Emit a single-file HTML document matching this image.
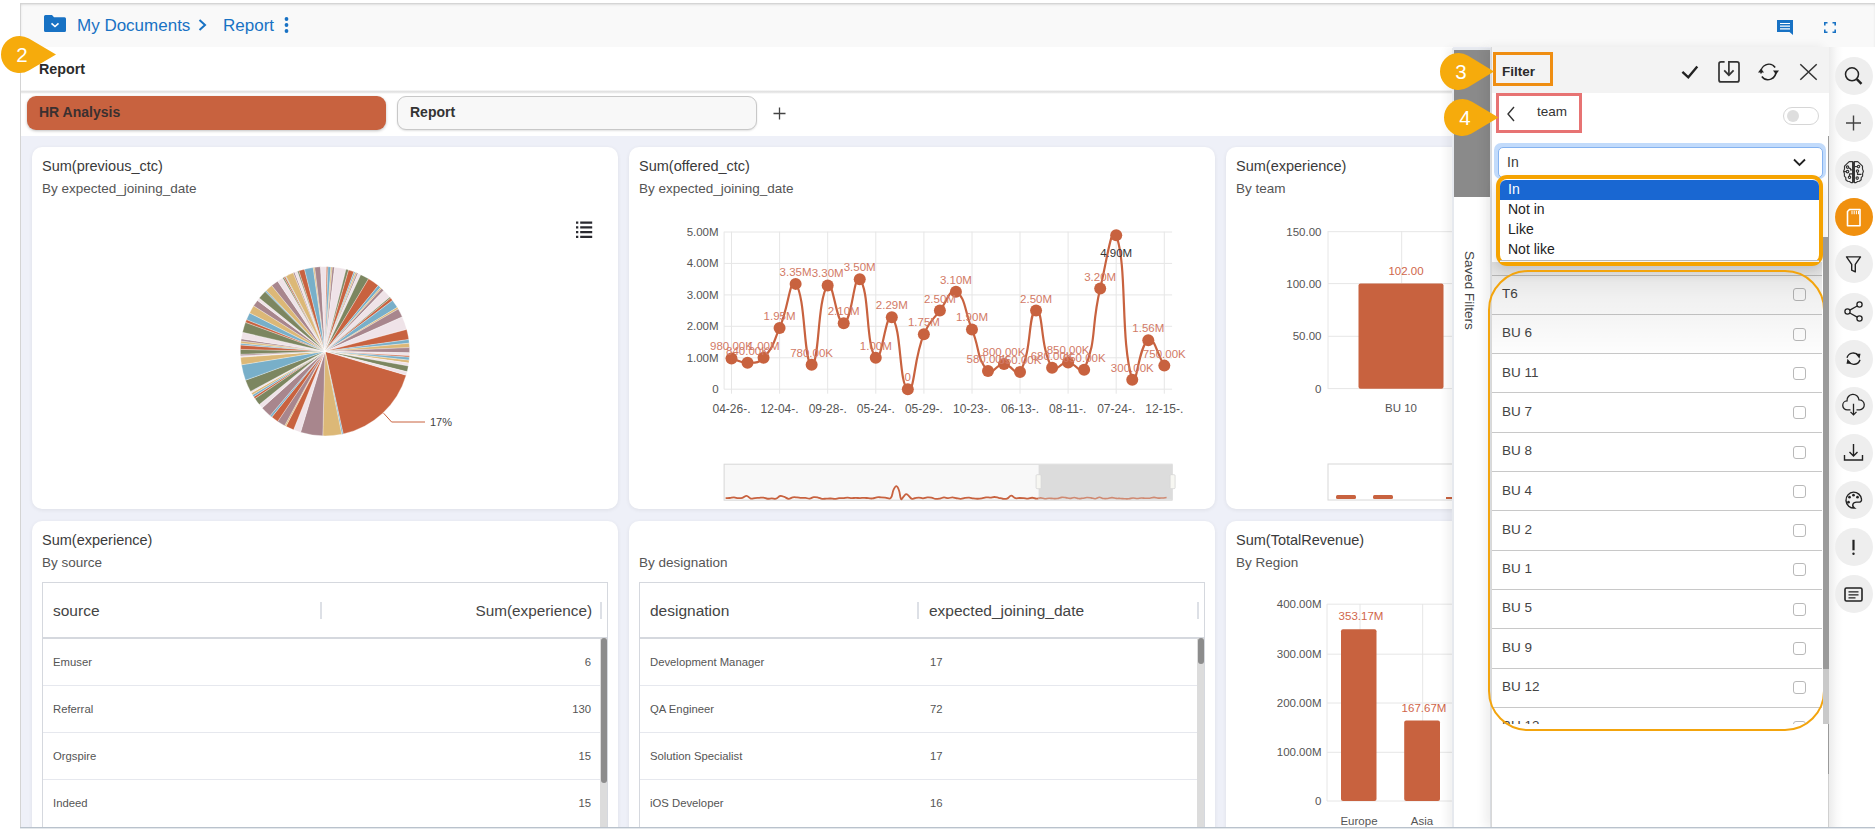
<!DOCTYPE html>
<html><head><meta charset="utf-8"><style>
*{box-sizing:border-box;margin:0;padding:0}
html,body{width:1875px;height:829px;overflow:hidden;background:#fff;font-family:"Liberation Sans", sans-serif;color:#333}
.a{position:absolute}
.t{position:absolute;white-space:nowrap;line-height:1}
svg{position:absolute;overflow:visible}
</style></head><body>
<div class="a" style="left:20px;top:3px;width:1855px;height:826px;background:#eef0f8"></div><div class="a" style="left:20px;top:3px;width:1px;height:826px;background:#d4d4d4"></div><div class="a" style="left:21px;top:3px;width:1854px;height:44px;background:#f9f9f9;box-shadow:inset 0 2px 3px -1px rgba(0,0,0,0.22)"></div><div class="a" style="left:21px;top:47px;width:1432px;height:45px;background:#fff"></div><div class="a" style="left:21px;top:90px;width:1432px;height:4px;background:linear-gradient(#fff,#e4e4e4 30%,#e0e0e0 50%,#f4f4f4 80%,#fff)"></div><div class="a" style="left:21px;top:94px;width:1432px;height:42px;background:#fff"></div><div class="a" style="left:20px;top:826.5px;width:1855px;height:1.5px;background:#b9c2cc"></div><div class="a" style="left:20px;top:828px;width:1855px;height:1px;background:#e4e8ec"></div><svg style="left:44px;top:15px" width="22" height="17" viewBox="0 0 22 17">
<path d="M1.5 0 H8 L10 2.2 H20.5 Q22 2.2 22 3.7 V15.5 Q22 17 20.5 17 H1.5 Q0 17 0 15.5 V1.5 Q0 0 1.5 0Z" fill="#1872c4"/>
<path d="M7.5 8.3 L11 11.5 L14.5 8.3" stroke="#fff" stroke-width="1.6" fill="none"/>
</svg><div class="t" style="left:77px;top:17px;font-size:17px;color:#1872c4">My Documents</div><svg style="left:198px;top:19px" width="9" height="12" viewBox="0 0 9 12"><path d="M1.5 1 L7 6 L1.5 11" stroke="#1872c4" stroke-width="2" fill="none"/></svg><div class="t" style="left:223px;top:17px;font-size:17px;color:#1872c4">Report</div><svg style="left:283px;top:17px" width="7" height="16" viewBox="0 0 7 16"><circle cx="3.5" cy="2" r="1.9" fill="#1872c4"/><circle cx="3.5" cy="8" r="1.9" fill="#1872c4"/><circle cx="3.5" cy="14" r="1.9" fill="#1872c4"/></svg><svg style="left:1777px;top:20px" width="16" height="15" viewBox="0 0 16 15">
<path d="M0 0 H16 V15 L12.5 12 H0 Z" fill="#1872c4"/>
<path d="M3 3.5 H13 M3 6.2 H13 M3 8.9 H13" stroke="#fff" stroke-width="1.2"/>
</svg><svg style="left:1824px;top:22px" width="12" height="11" viewBox="0 0 12 11">
<path d="M0.8 3.5 V0.8 H3.5 M8.5 0.8 H11.2 V3.5 M11.2 7.5 V10.2 H8.5 M3.5 10.2 H0.8 V7.5" stroke="#1872c4" stroke-width="1.6" fill="none"/>
</svg><div class="t" style="left:39px;top:61.5px;font-size:14.3px;font-weight:bold;color:#2b2b2b">Report</div><div class="a" style="left:27px;top:96px;width:359px;height:34px;background:#c8623f;border-radius:9px;box-shadow:0 1px 3px rgba(0,0,0,0.25)"></div><div class="t" style="left:39px;top:105px;font-size:14px;font-weight:bold;color:#3a3030">HR Analysis</div><div class="a" style="left:397px;top:96px;width:360px;height:34px;background:#f8f8f8;border:1px solid #c8c8c8;border-radius:9px;box-shadow:0 1px 2px rgba(0,0,0,0.12)"></div><div class="t" style="left:410px;top:105px;font-size:14px;font-weight:bold;color:#333">Report</div><svg style="left:773px;top:107px" width="13" height="13" viewBox="0 0 13 13"><path d="M6.5 0.5 V12.5 M0.5 6.5 H12.5" stroke="#444" stroke-width="1.3"/></svg><div class="a" style="left:32px;top:147px;width:586px;height:362px;background:#fff;border-radius:10px;box-shadow:0 1px 4px rgba(0,0,0,0.07)"></div><div class="t" style="left:42px;top:159px;font-size:14.5px;color:#3b3b3b">Sum(previous_ctc)</div><div class="t" style="left:42px;top:182px;font-size:13.5px;color:#555">By expected_joining_date</div><div class="a" style="left:629px;top:147px;width:586px;height:362px;background:#fff;border-radius:10px;box-shadow:0 1px 4px rgba(0,0,0,0.07)"></div><div class="t" style="left:639px;top:159px;font-size:14.5px;color:#3b3b3b">Sum(offered_ctc)</div><div class="t" style="left:639px;top:182px;font-size:13.5px;color:#555">By expected_joining_date</div><div class="a" style="left:1226px;top:147px;width:586px;height:362px;background:#fff;border-radius:10px;box-shadow:0 1px 4px rgba(0,0,0,0.07)"></div><div class="t" style="left:1236px;top:159px;font-size:14.5px;color:#3b3b3b">Sum(experience)</div><div class="t" style="left:1236px;top:182px;font-size:13.5px;color:#555">By team</div><div class="a" style="left:32px;top:521px;width:586px;height:340px;background:#fff;border-radius:10px;box-shadow:0 1px 4px rgba(0,0,0,0.07)"></div><div class="t" style="left:42px;top:533px;font-size:14.5px;color:#3b3b3b">Sum(experience)</div><div class="t" style="left:42px;top:556px;font-size:13.5px;color:#555">By source</div><div class="a" style="left:629px;top:521px;width:586px;height:340px;background:#fff;border-radius:10px;box-shadow:0 1px 4px rgba(0,0,0,0.07)"></div><div class="t" style="left:639px;top:556px;font-size:13.5px;color:#555">By designation</div><div class="a" style="left:1226px;top:521px;width:586px;height:340px;background:#fff;border-radius:10px;box-shadow:0 1px 4px rgba(0,0,0,0.07)"></div><div class="t" style="left:1236px;top:533px;font-size:14.5px;color:#3b3b3b">Sum(TotalRevenue)</div><div class="t" style="left:1236px;top:556px;font-size:13.5px;color:#555">By Region</div><svg style="left:0;top:0" width="1875" height="829"><path d="M325 351.3 L406.16 375.19 A84.6 84.6 0 0 1 343.17 433.93Z" fill="#c8623f" stroke="#fff" stroke-width="0.3"/><path d="M325 351.3 L343.17 433.93 A84.6 84.6 0 0 1 341.72 434.23Z" fill="#78afc9" stroke="#fff" stroke-width="0.3"/><path d="M325 351.3 L341.72 434.23 A84.6 84.6 0 0 1 322.79 435.87Z" fill="#dcb877" stroke="#fff" stroke-width="0.3"/><path d="M325 351.3 L322.79 435.87 A84.6 84.6 0 0 1 300.55 432.29Z" fill="#a8868d" stroke="#fff" stroke-width="0.3"/><path d="M325 351.3 L300.55 432.29 A84.6 84.6 0 0 1 293.58 429.85Z" fill="#efe3e8" stroke="#fff" stroke-width="0.3"/><path d="M325 351.3 L293.58 429.85 A84.6 84.6 0 0 1 285.94 426.34Z" fill="#c8623f" stroke="#fff" stroke-width="0.3"/><path d="M325 351.3 L285.94 426.34 A84.6 84.6 0 0 1 284.63 425.65Z" fill="#dcb877" stroke="#fff" stroke-width="0.3"/><path d="M325 351.3 L284.63 425.65 A84.6 84.6 0 0 1 277.69 421.44Z" fill="#a8868d" stroke="#fff" stroke-width="0.3"/><path d="M325 351.3 L277.69 421.44 A84.6 84.6 0 0 1 271.76 417.05Z" fill="#c8623f" stroke="#fff" stroke-width="0.3"/><path d="M325 351.3 L271.76 417.05 A84.6 84.6 0 0 1 270.06 415.63Z" fill="#78afc9" stroke="#fff" stroke-width="0.3"/><path d="M325 351.3 L270.06 415.63 A84.6 84.6 0 0 1 262.13 407.91Z" fill="#a8868d" stroke="#fff" stroke-width="0.3"/><path d="M325 351.3 L262.13 407.91 A84.6 84.6 0 0 1 259.25 404.54Z" fill="#efe3e8" stroke="#fff" stroke-width="0.3"/><path d="M325 351.3 L259.25 404.54 A84.6 84.6 0 0 1 254.86 398.61Z" fill="#7c8660" stroke="#fff" stroke-width="0.3"/><path d="M325 351.3 L254.86 398.61 A84.6 84.6 0 0 1 253.65 396.76Z" fill="#c8623f" stroke="#fff" stroke-width="0.3"/><path d="M325 351.3 L253.65 396.76 A84.6 84.6 0 0 1 252.48 394.87Z" fill="#78afc9" stroke="#fff" stroke-width="0.3"/><path d="M325 351.3 L252.48 394.87 A84.6 84.6 0 0 1 251.37 392.96Z" fill="#dcb877" stroke="#fff" stroke-width="0.3"/><path d="M325 351.3 L251.37 392.96 A84.6 84.6 0 0 1 250.51 391.41Z" fill="#efe3e8" stroke="#fff" stroke-width="0.3"/><path d="M325 351.3 L250.51 391.41 A84.6 84.6 0 0 1 245.50 380.23Z" fill="#7c8660" stroke="#fff" stroke-width="0.3"/><path d="M325 351.3 L245.50 380.23 A84.6 84.6 0 0 1 241.49 364.83Z" fill="#78afc9" stroke="#fff" stroke-width="0.3"/><path d="M325 351.3 L241.49 364.83 A84.6 84.6 0 0 1 240.61 357.20Z" fill="#dcb877" stroke="#fff" stroke-width="0.3"/><path d="M325 351.3 L240.61 357.20 A84.6 84.6 0 0 1 240.52 355.73Z" fill="#efe3e8" stroke="#fff" stroke-width="0.3"/><path d="M325 351.3 L240.52 355.73 A84.6 84.6 0 0 1 240.45 354.25Z" fill="#a8868d" stroke="#fff" stroke-width="0.3"/><path d="M325 351.3 L240.45 354.25 A84.6 84.6 0 0 1 240.42 349.38Z" fill="#7c8660" stroke="#fff" stroke-width="0.3"/><path d="M325 351.3 L240.42 349.38 A84.6 84.6 0 0 1 240.64 344.96Z" fill="#c8623f" stroke="#fff" stroke-width="0.3"/><path d="M325 351.3 L240.64 344.96 A84.6 84.6 0 0 1 240.79 343.19Z" fill="#78afc9" stroke="#fff" stroke-width="0.3"/><path d="M325 351.3 L240.79 343.19 A84.6 84.6 0 0 1 241.03 340.99Z" fill="#dcb877" stroke="#fff" stroke-width="0.3"/><path d="M325 351.3 L241.03 340.99 A84.6 84.6 0 0 1 241.33 338.80Z" fill="#a8868d" stroke="#fff" stroke-width="0.3"/><path d="M325 351.3 L241.33 338.80 A84.6 84.6 0 0 1 242.57 332.27Z" fill="#efe3e8" stroke="#fff" stroke-width="0.3"/><path d="M325 351.3 L242.57 332.27 A84.6 84.6 0 0 1 245.50 322.37Z" fill="#7c8660" stroke="#fff" stroke-width="0.3"/><path d="M325 351.3 L245.50 322.37 A84.6 84.6 0 0 1 246.56 319.61Z" fill="#c8623f" stroke="#fff" stroke-width="0.3"/><path d="M325 351.3 L246.56 319.61 A84.6 84.6 0 0 1 249.62 312.89Z" fill="#78afc9" stroke="#fff" stroke-width="0.3"/><path d="M325 351.3 L249.62 312.89 A84.6 84.6 0 0 1 253.65 305.84Z" fill="#dcb877" stroke="#fff" stroke-width="0.3"/><path d="M325 351.3 L253.65 305.84 A84.6 84.6 0 0 1 257.44 300.39Z" fill="#a8868d" stroke="#fff" stroke-width="0.3"/><path d="M325 351.3 L257.44 300.39 A84.6 84.6 0 0 1 259.25 298.06Z" fill="#efe3e8" stroke="#fff" stroke-width="0.3"/><path d="M325 351.3 L259.25 298.06 A84.6 84.6 0 0 1 265.18 291.48Z" fill="#7c8660" stroke="#fff" stroke-width="0.3"/><path d="M325 351.3 L265.18 291.48 A84.6 84.6 0 0 1 266.23 290.44Z" fill="#78afc9" stroke="#fff" stroke-width="0.3"/><path d="M325 351.3 L266.23 290.44 A84.6 84.6 0 0 1 271.76 285.55Z" fill="#dcb877" stroke="#fff" stroke-width="0.3"/><path d="M325 351.3 L271.76 285.55 A84.6 84.6 0 0 1 277.69 281.16Z" fill="#a8868d" stroke="#fff" stroke-width="0.3"/><path d="M325 351.3 L277.69 281.16 A84.6 84.6 0 0 1 282.70 278.03Z" fill="#efe3e8" stroke="#fff" stroke-width="0.3"/><path d="M325 351.3 L282.70 278.03 A84.6 84.6 0 0 1 283.99 277.31Z" fill="#7c8660" stroke="#fff" stroke-width="0.3"/><path d="M325 351.3 L283.99 277.31 A84.6 84.6 0 0 1 285.28 276.60Z" fill="#c8623f" stroke="#fff" stroke-width="0.3"/><path d="M325 351.3 L285.28 276.60 A84.6 84.6 0 0 1 285.94 276.26Z" fill="#78afc9" stroke="#fff" stroke-width="0.3"/><path d="M325 351.3 L285.94 276.26 A84.6 84.6 0 0 1 293.31 272.86Z" fill="#dcb877" stroke="#fff" stroke-width="0.3"/><path d="M325 351.3 L293.31 272.86 A84.6 84.6 0 0 1 294.68 272.32Z" fill="#a8868d" stroke="#fff" stroke-width="0.3"/><path d="M325 351.3 L294.68 272.32 A84.6 84.6 0 0 1 297.46 271.31Z" fill="#efe3e8" stroke="#fff" stroke-width="0.3"/><path d="M325 351.3 L297.46 271.31 A84.6 84.6 0 0 1 298.86 270.84Z" fill="#7c8660" stroke="#fff" stroke-width="0.3"/><path d="M325 351.3 L298.86 270.84 A84.6 84.6 0 0 1 304.53 269.21Z" fill="#c8623f" stroke="#fff" stroke-width="0.3"/><path d="M325 351.3 L304.53 269.21 A84.6 84.6 0 0 1 313.23 267.52Z" fill="#78afc9" stroke="#fff" stroke-width="0.3"/><path d="M325 351.3 L313.23 267.52 A84.6 84.6 0 0 1 314.69 267.33Z" fill="#dcb877" stroke="#fff" stroke-width="0.3"/><path d="M325 351.3 L314.69 267.33 A84.6 84.6 0 0 1 320.57 266.82Z" fill="#a8868d" stroke="#fff" stroke-width="0.3"/><path d="M325 351.3 L320.57 266.82 A84.6 84.6 0 0 1 326.48 266.71Z" fill="#efe3e8" stroke="#fff" stroke-width="0.3"/><path d="M325 351.3 L326.48 266.71 A84.6 84.6 0 0 1 327.95 266.75Z" fill="#c8623f" stroke="#fff" stroke-width="0.3"/><path d="M325 351.3 L327.95 266.75 A84.6 84.6 0 0 1 330.90 266.91Z" fill="#78afc9" stroke="#fff" stroke-width="0.3"/><path d="M325 351.3 L330.90 266.91 A84.6 84.6 0 0 1 332.37 267.02Z" fill="#dcb877" stroke="#fff" stroke-width="0.3"/><path d="M325 351.3 L332.37 267.02 A84.6 84.6 0 0 1 334.58 267.24Z" fill="#a8868d" stroke="#fff" stroke-width="0.3"/><path d="M325 351.3 L334.58 267.24 A84.6 84.6 0 0 1 346.04 269.36Z" fill="#efe3e8" stroke="#fff" stroke-width="0.3"/><path d="M325 351.3 L346.04 269.36 A84.6 84.6 0 0 1 348.60 270.06Z" fill="#7c8660" stroke="#fff" stroke-width="0.3"/><path d="M325 351.3 L348.60 270.06 A84.6 84.6 0 0 1 353.93 271.80Z" fill="#c8623f" stroke="#fff" stroke-width="0.3"/><path d="M325 351.3 L353.93 271.80 A84.6 84.6 0 0 1 355.32 272.32Z" fill="#78afc9" stroke="#fff" stroke-width="0.3"/><path d="M325 351.3 L355.32 272.32 A84.6 84.6 0 0 1 356.69 272.86Z" fill="#dcb877" stroke="#fff" stroke-width="0.3"/><path d="M325 351.3 L356.69 272.86 A84.6 84.6 0 0 1 358.06 273.43Z" fill="#a8868d" stroke="#fff" stroke-width="0.3"/><path d="M325 351.3 L358.06 273.43 A84.6 84.6 0 0 1 360.75 274.63Z" fill="#efe3e8" stroke="#fff" stroke-width="0.3"/><path d="M325 351.3 L360.75 274.63 A84.6 84.6 0 0 1 368.57 278.78Z" fill="#7c8660" stroke="#fff" stroke-width="0.3"/><path d="M325 351.3 L368.57 278.78 A84.6 84.6 0 0 1 378.24 285.55Z" fill="#c8623f" stroke="#fff" stroke-width="0.3"/><path d="M325 351.3 L378.24 285.55 A84.6 84.6 0 0 1 380.50 287.45Z" fill="#78afc9" stroke="#fff" stroke-width="0.3"/><path d="M325 351.3 L380.50 287.45 A84.6 84.6 0 0 1 381.61 288.43Z" fill="#dcb877" stroke="#fff" stroke-width="0.3"/><path d="M325 351.3 L381.61 288.43 A84.6 84.6 0 0 1 383.77 290.44Z" fill="#a8868d" stroke="#fff" stroke-width="0.3"/><path d="M325 351.3 L383.77 290.44 A84.6 84.6 0 0 1 389.81 296.92Z" fill="#efe3e8" stroke="#fff" stroke-width="0.3"/><path d="M325 351.3 L389.81 296.92 A84.6 84.6 0 0 1 390.75 298.06Z" fill="#7c8660" stroke="#fff" stroke-width="0.3"/><path d="M325 351.3 L390.75 298.06 A84.6 84.6 0 0 1 392.56 300.39Z" fill="#c8623f" stroke="#fff" stroke-width="0.3"/><path d="M325 351.3 L392.56 300.39 A84.6 84.6 0 0 1 397.29 307.35Z" fill="#78afc9" stroke="#fff" stroke-width="0.3"/><path d="M325 351.3 L397.29 307.35 A84.6 84.6 0 0 1 398.27 309.00Z" fill="#dcb877" stroke="#fff" stroke-width="0.3"/><path d="M325 351.3 L398.27 309.00 A84.6 84.6 0 0 1 402.29 316.89Z" fill="#a8868d" stroke="#fff" stroke-width="0.3"/><path d="M325 351.3 L402.29 316.89 A84.6 84.6 0 0 1 406.72 329.40Z" fill="#efe3e8" stroke="#fff" stroke-width="0.3"/><path d="M325 351.3 L406.72 329.40 A84.6 84.6 0 0 1 408.78 339.53Z" fill="#c8623f" stroke="#fff" stroke-width="0.3"/><path d="M325 351.3 L408.78 339.53 A84.6 84.6 0 0 1 409.21 343.19Z" fill="#78afc9" stroke="#fff" stroke-width="0.3"/><path d="M325 351.3 L409.21 343.19 A84.6 84.6 0 0 1 409.52 347.61Z" fill="#dcb877" stroke="#fff" stroke-width="0.3"/><path d="M325 351.3 L409.52 347.61 A84.6 84.6 0 0 1 409.59 352.78Z" fill="#a8868d" stroke="#fff" stroke-width="0.3"/><path d="M325 351.3 L409.59 352.78 A84.6 84.6 0 0 1 409.48 355.73Z" fill="#efe3e8" stroke="#fff" stroke-width="0.3"/><path d="M325 351.3 L409.48 355.73 A84.6 84.6 0 0 1 409.39 357.20Z" fill="#c8623f" stroke="#fff" stroke-width="0.3"/><path d="M325 351.3 L409.39 357.20 A84.6 84.6 0 0 1 409.14 360.14Z" fill="#78afc9" stroke="#fff" stroke-width="0.3"/><path d="M325 351.3 L409.14 360.14 A84.6 84.6 0 0 1 408.78 363.07Z" fill="#dcb877" stroke="#fff" stroke-width="0.3"/><path d="M325 351.3 L408.78 363.07 A84.6 84.6 0 0 1 408.31 365.99Z" fill="#efe3e8" stroke="#fff" stroke-width="0.3"/><path d="M325 351.3 L408.31 365.99 A84.6 84.6 0 0 1 407.09 371.77Z" fill="#7c8660" stroke="#fff" stroke-width="0.3"/><path d="M325 351.3 L407.09 371.77 A84.6 84.6 0 0 1 406.16 375.19Z" fill="#efe3e8" stroke="#fff" stroke-width="0.3"/><path d="M383.6 413.2 L391.6 422 H425" stroke="#c8623f" stroke-width="1" fill="none"/><text x="430" y="426" font-size="11" fill="#444" font-family="Liberation Sans">17%</text></svg><svg style="left:0;top:0" width="1875" height="829">
<path d="M576 222.7 H578.3 M576 227.4 H578.3 M576 232.1 H578.3 M576 236.8 H578.3 M580.2 222.7 H592.2 M580.2 227.4 H592.2 M580.2 232.1 H592.2 M580.2 236.8 H592.2" stroke="#2a2a30" stroke-width="2.2"/></svg><svg style="left:0;top:0" width="1875" height="829" font-family="Liberation Sans"><g transform="translate(0.6 0.7)"><path d="M723.5 388.5 H1171.5" stroke="#e6e6e6" stroke-width="1"/><path d="M723.5 357.1 H1171.5" stroke="#e6e6e6" stroke-width="1"/><path d="M723.5 325.6 H1171.5" stroke="#e6e6e6" stroke-width="1"/><path d="M723.5 294.2 H1171.5" stroke="#e6e6e6" stroke-width="1"/><path d="M723.5 262.7 H1171.5" stroke="#e6e6e6" stroke-width="1"/><path d="M723.5 231.3 H1171.5" stroke="#e6e6e6" stroke-width="1"/><path d="M730.9 231 V393" stroke="#e6e6e6" stroke-width="1"/><path d="M779.0 231 V393" stroke="#e6e6e6" stroke-width="1"/><path d="M827.1 231 V393" stroke="#e6e6e6" stroke-width="1"/><path d="M875.2 231 V393" stroke="#e6e6e6" stroke-width="1"/><path d="M923.3 231 V393" stroke="#e6e6e6" stroke-width="1"/><path d="M971.4 231 V393" stroke="#e6e6e6" stroke-width="1"/><path d="M1019.4 231 V393" stroke="#e6e6e6" stroke-width="1"/><path d="M1067.5 231 V393" stroke="#e6e6e6" stroke-width="1"/><path d="M1115.6 231 V393" stroke="#e6e6e6" stroke-width="1"/><path d="M1163.7 231 V393" stroke="#e6e6e6" stroke-width="1"/><path d="M723.5 231 V388.5" stroke="#e6e6e6" stroke-width="1"/><text x="718" y="392.5" font-size="11.5" fill="#555" text-anchor="end">0</text><text x="718" y="361.1" font-size="11.5" fill="#555" text-anchor="end">1.00M</text><text x="718" y="329.6" font-size="11.5" fill="#555" text-anchor="end">2.00M</text><text x="718" y="298.2" font-size="11.5" fill="#555" text-anchor="end">3.00M</text><text x="718" y="266.7" font-size="11.5" fill="#555" text-anchor="end">4.00M</text><text x="718" y="235.3" font-size="11.5" fill="#555" text-anchor="end">5.00M</text><text x="711.9" y="412" font-size="12" fill="#555">04-26-.</text><text x="760.0" y="412" font-size="12" fill="#555">12-04-.</text><text x="808.1" y="412" font-size="12" fill="#555">09-28-.</text><text x="856.2" y="412" font-size="12" fill="#555">05-24-.</text><text x="904.3" y="412" font-size="12" fill="#555">05-29-.</text><text x="952.4" y="412" font-size="12" fill="#555">10-23-.</text><text x="1000.4" y="412" font-size="12" fill="#555">06-13-.</text><text x="1048.5" y="412" font-size="12" fill="#555">08-11-.</text><text x="1096.6" y="412" font-size="12" fill="#555">07-24-.</text><text x="1144.7" y="412" font-size="12" fill="#555">12-15-.</text><path d="M730.90 357.69 C738.91 359.89 738.96 362.25 746.93 362.09 C754.99 361.93 757.65 362.84 762.96 357.06 C773.68 345.39 772.26 342.70 778.99 327.19 C788.29 305.76 789.21 276.51 795.02 283.18 C805.24 294.90 802.96 363.58 811.05 363.98 C818.99 364.37 816.44 298.52 827.08 284.75 C832.47 277.77 835.63 323.94 843.11 322.48 C851.66 320.80 853.23 272.08 859.14 278.46 C869.26 289.38 864.79 344.74 875.17 357.06 C880.82 363.76 885.24 310.66 891.20 316.50 C901.27 326.38 898.21 383.72 907.23 388.50 C914.24 392.21 912.56 359.72 923.26 333.48 C928.59 320.42 930.71 321.26 939.29 309.90 C946.74 300.04 949.28 287.48 955.32 291.04 C965.31 296.92 963.66 309.77 971.35 328.76 C979.69 349.38 975.87 357.85 987.38 370.26 C991.90 375.14 995.48 363.11 1003.41 363.35 C1011.51 363.59 1015.92 377.08 1019.44 371.21 C1031.95 350.36 1027.20 310.95 1035.47 309.90 C1043.23 308.91 1039.02 346.93 1051.50 367.12 C1055.05 372.86 1059.67 361.31 1067.53 361.78 C1075.70 362.26 1080.75 375.49 1083.56 369.01 C1096.78 338.54 1090.02 328.06 1099.59 287.89 C1106.05 260.78 1111.18 221.81 1115.62 234.44 C1127.21 267.40 1119.26 338.48 1131.65 379.07 C1135.29 390.99 1138.27 343.60 1147.68 339.45 C1154.30 336.53 1155.70 352.19 1163.71 364.92" stroke="#c8623f" stroke-width="2.2" fill="none"/><circle cx="730.90" cy="357.69" r="6" fill="#c8623f"/><circle cx="746.93" cy="362.09" r="6" fill="#c8623f"/><circle cx="762.96" cy="357.06" r="6" fill="#c8623f"/><circle cx="778.99" cy="327.19" r="6" fill="#c8623f"/><circle cx="795.02" cy="283.18" r="6" fill="#c8623f"/><circle cx="811.05" cy="363.98" r="6" fill="#c8623f"/><circle cx="827.08" cy="284.75" r="6" fill="#c8623f"/><circle cx="843.11" cy="322.48" r="6" fill="#c8623f"/><circle cx="859.14" cy="278.46" r="6" fill="#c8623f"/><circle cx="875.17" cy="357.06" r="6" fill="#c8623f"/><circle cx="891.20" cy="316.50" r="6" fill="#c8623f"/><circle cx="907.23" cy="388.50" r="6" fill="#c8623f"/><circle cx="923.26" cy="333.48" r="6" fill="#c8623f"/><circle cx="939.29" cy="309.90" r="6" fill="#c8623f"/><circle cx="955.32" cy="291.04" r="6" fill="#c8623f"/><circle cx="971.35" cy="328.76" r="6" fill="#c8623f"/><circle cx="987.38" cy="370.26" r="6" fill="#c8623f"/><circle cx="1003.41" cy="363.35" r="6" fill="#c8623f"/><circle cx="1019.44" cy="371.21" r="6" fill="#c8623f"/><circle cx="1035.47" cy="309.90" r="6" fill="#c8623f"/><circle cx="1051.50" cy="367.12" r="6" fill="#c8623f"/><circle cx="1067.53" cy="361.78" r="6" fill="#c8623f"/><circle cx="1083.56" cy="369.01" r="6" fill="#c8623f"/><circle cx="1099.59" cy="287.89" r="6" fill="#c8623f"/><circle cx="1115.62" cy="234.44" r="6" fill="#c8623f"/><circle cx="1131.65" cy="379.07" r="6" fill="#c8623f"/><circle cx="1147.68" cy="339.45" r="6" fill="#c8623f"/><circle cx="1163.71" cy="364.92" r="6" fill="#c8623f"/><text x="730.9" y="349.7" font-size="11.5" fill="#d27a66" text-anchor="middle">980.00K</text><text x="746.9" y="354.1" font-size="11.5" fill="#d27a66" text-anchor="middle">840.00K</text><text x="763.0" y="349.1" font-size="11.5" fill="#d27a66" text-anchor="middle">1.00M</text><text x="779.0" y="319.2" font-size="11.5" fill="#d27a66" text-anchor="middle">1.95M</text><text x="795.0" y="275.2" font-size="11.5" fill="#d27a66" text-anchor="middle">3.35M</text><text x="811.0" y="356.0" font-size="11.5" fill="#d27a66" text-anchor="middle">780.00K</text><text x="827.1" y="276.7" font-size="11.5" fill="#d27a66" text-anchor="middle">3.30M</text><text x="843.1" y="314.5" font-size="11.5" fill="#d27a66" text-anchor="middle">2.10M</text><text x="859.1" y="270.5" font-size="11.5" fill="#d27a66" text-anchor="middle">3.50M</text><text x="875.2" y="349.1" font-size="11.5" fill="#d27a66" text-anchor="middle">1.00M</text><text x="891.2" y="308.5" font-size="11.5" fill="#d27a66" text-anchor="middle">2.29M</text><text x="907.2" y="380.5" font-size="11.5" fill="#d27a66" text-anchor="middle">0</text><text x="923.3" y="325.5" font-size="11.5" fill="#d27a66" text-anchor="middle">1.75M</text><text x="939.3" y="301.9" font-size="11.5" fill="#d27a66" text-anchor="middle">2.50M</text><text x="955.3" y="283.0" font-size="11.5" fill="#d27a66" text-anchor="middle">3.10M</text><text x="971.4" y="320.8" font-size="11.5" fill="#d27a66" text-anchor="middle">1.90M</text><text x="987.4" y="362.3" font-size="11.5" fill="#d27a66" text-anchor="middle">580.00K</text><text x="1003.4" y="355.3" font-size="11.5" fill="#d27a66" text-anchor="middle">800.00K</text><text x="1019.4" y="363.2" font-size="11.5" fill="#d27a66" text-anchor="middle">550.00K</text><text x="1035.5" y="301.9" font-size="11.5" fill="#d27a66" text-anchor="middle">2.50M</text><text x="1051.5" y="359.1" font-size="11.5" fill="#d27a66" text-anchor="middle">680.00K</text><text x="1067.5" y="353.8" font-size="11.5" fill="#d27a66" text-anchor="middle">850.00K</text><text x="1083.6" y="361.0" font-size="11.5" fill="#d27a66" text-anchor="middle">650.00K</text><text x="1099.6" y="279.9" font-size="11.5" fill="#d27a66" text-anchor="middle">3.20M</text><text x="1115.6" y="256.4" font-size="11.5" fill="#333" text-anchor="middle">4.90M</text><text x="1131.7" y="371.1" font-size="11.5" fill="#d27a66" text-anchor="middle">300.00K</text><text x="1147.7" y="331.5" font-size="11.5" fill="#d27a66" text-anchor="middle">1.56M</text><text x="1163.7" y="356.9" font-size="11.5" fill="#d27a66" text-anchor="middle">750.00K</text><rect x="723.5" y="463.5" width="448" height="36" fill="#f8f8f8" stroke="#d8d8d8" stroke-width="1"/><rect x="1038" y="464" width="134" height="35" fill="#dcdcdc"/><clipPath id="cl1"><rect x="723" y="460" width="315" height="45"/></clipPath><clipPath id="cl2"><rect x="1038" y="460" width="140" height="45"/></clipPath><path d="M725.00 497.48 C726.68 497.41 727.53 497.45 729.20 497.30 C730.89 497.15 731.72 496.69 733.40 496.72 C735.08 496.75 735.91 497.37 737.60 497.45 C739.27 497.54 740.20 497.58 741.80 497.14 C743.56 496.66 744.38 495.01 746.00 495.15 C747.74 495.29 748.38 497.36 750.20 497.84 C751.74 498.25 752.72 497.51 754.40 497.38 C756.08 497.25 756.92 497.28 758.60 497.19 C760.28 497.10 761.15 496.76 762.80 496.93 C764.51 497.11 765.29 497.89 767.00 498.05 C768.65 498.20 769.52 497.73 771.20 497.71 C772.88 497.70 773.86 498.44 775.40 497.99 C777.22 497.47 777.80 495.67 779.60 495.30 C781.16 494.97 782.17 495.71 783.80 496.25 C785.53 496.84 786.29 498.05 788.00 498.12 C789.65 498.20 790.47 496.93 792.20 496.63 C793.83 496.34 794.73 496.55 796.40 496.66 C798.09 496.76 798.91 497.04 800.60 497.15 C802.27 497.27 803.13 497.08 804.80 497.21 C806.49 497.35 807.35 497.98 809.00 497.84 C810.71 497.69 811.48 496.70 813.20 496.50 C814.84 496.31 815.75 496.54 817.40 496.86 C819.11 497.18 819.89 497.89 821.60 498.10 C823.25 498.31 824.12 497.95 825.80 497.90 C827.48 497.84 828.32 497.76 830.00 497.81 C831.68 497.86 832.53 498.22 834.20 498.15 C835.89 498.08 836.71 497.59 838.40 497.46 C840.07 497.33 840.93 497.62 842.60 497.50 C844.29 497.37 845.12 496.88 846.80 496.85 C848.48 496.83 849.31 497.30 851.00 497.37 C852.67 497.43 853.52 497.17 855.20 497.18 C856.88 497.18 857.72 497.41 859.40 497.40 C861.08 497.39 861.92 497.13 863.60 497.14 C865.28 497.15 866.12 497.35 867.80 497.47 C869.48 497.59 870.35 497.92 872.00 497.75 C873.71 497.58 874.49 496.84 876.20 496.60 C877.85 496.38 878.72 496.56 880.40 496.61 C882.08 496.66 882.93 496.70 884.60 496.86 C886.77 497.06 888.74 498.68 890.00 497.50 C892.10 495.54 891.45 492.21 893.00 489.00 C893.77 487.41 894.79 485.32 895.80 485.50 C896.99 485.72 897.79 488.05 898.50 490.00 C899.67 493.25 899.22 496.79 900.50 498.50 C901.02 499.19 902.00 497.00 903.00 496.00 C904.00 495.00 904.40 493.72 905.50 493.50 C906.40 493.32 907.10 494.27 908.00 495.00 C909.30 496.07 909.60 497.40 911.00 498.00 C912.00 498.43 912.80 497.75 914.00 497.56 C915.68 497.29 916.52 496.84 918.20 496.85 C919.88 496.85 920.73 497.62 922.40 497.58 C924.09 497.55 924.90 496.82 926.60 496.67 C928.26 496.52 929.16 496.55 930.80 496.84 C932.52 497.16 933.28 497.99 935.00 498.20 C936.64 498.40 937.55 498.15 939.20 497.86 C940.91 497.57 941.70 496.83 943.40 496.74 C945.06 496.66 945.92 497.47 947.60 497.45 C949.28 497.43 950.12 496.61 951.80 496.63 C953.48 496.65 954.31 497.27 956.00 497.56 C957.67 497.85 958.53 498.16 960.20 498.08 C961.89 498.01 962.70 497.42 964.40 497.19 C966.06 496.97 966.93 496.84 968.60 496.95 C970.29 497.07 971.11 497.55 972.80 497.77 C974.47 497.99 975.32 498.08 977.00 498.06 C978.68 498.04 979.54 497.95 981.20 497.67 C982.90 497.38 983.70 496.81 985.40 496.66 C987.06 496.51 987.93 496.98 989.60 496.91 C991.29 496.84 992.13 496.27 993.80 496.31 C995.49 496.34 996.33 496.73 998.00 497.07 C999.69 497.42 1000.50 497.86 1002.20 498.03 C1003.86 498.20 1004.89 498.47 1006.40 497.91 C1008.25 497.24 1008.88 495.04 1010.60 494.96 C1012.24 494.88 1012.99 497.01 1014.80 497.51 C1016.35 497.95 1017.32 497.31 1019.00 497.30 C1020.68 497.30 1021.52 497.37 1023.20 497.48 C1024.88 497.60 1025.73 497.99 1027.40 497.89 C1029.09 497.80 1029.92 497.01 1031.60 497.03 C1033.28 497.05 1034.11 497.96 1035.80 497.99 C1037.47 498.02 1038.32 497.17 1040.00 497.17 C1041.68 497.17 1042.51 497.94 1044.20 498.01 C1045.87 498.08 1046.72 497.56 1048.40 497.53 C1050.08 497.50 1050.92 497.81 1052.60 497.86 C1054.28 497.91 1055.15 498.01 1056.80 497.77 C1058.51 497.52 1059.29 496.82 1061.00 496.65 C1062.65 496.48 1063.53 496.70 1065.20 496.91 C1066.89 497.13 1067.73 497.74 1069.40 497.71 C1071.09 497.69 1071.93 496.75 1073.60 496.78 C1075.29 496.81 1076.10 497.70 1077.80 497.86 C1079.46 498.02 1080.33 497.77 1082.00 497.57 C1083.69 497.36 1084.51 496.91 1086.20 496.83 C1087.87 496.75 1088.73 496.93 1090.40 497.17 C1092.09 497.42 1092.95 498.15 1094.60 498.04 C1096.31 497.93 1097.11 496.65 1098.80 496.62 C1100.47 496.58 1101.28 497.62 1103.00 497.86 C1104.64 498.09 1105.54 497.96 1107.20 497.79 C1108.90 497.61 1109.72 496.99 1111.40 496.96 C1113.08 496.94 1113.91 497.52 1115.60 497.67 C1117.27 497.83 1118.12 497.64 1119.80 497.73 C1121.48 497.81 1122.32 498.02 1124.00 498.08 C1125.68 498.15 1126.53 498.22 1128.20 498.06 C1129.89 497.89 1130.71 497.32 1132.40 497.27 C1134.07 497.22 1134.92 497.82 1136.60 497.81 C1138.28 497.81 1139.12 497.28 1140.80 497.24 C1142.48 497.20 1143.32 497.56 1145.00 497.61 C1146.68 497.65 1147.53 497.66 1149.20 497.47 C1150.89 497.29 1151.72 496.68 1153.40 496.67 C1155.08 496.66 1155.91 497.30 1157.60 497.43 C1159.27 497.55 1160.12 497.40 1161.80 497.28 C1163.48 497.16 1164.32 497.00 1166.00 496.81" stroke="#c8623f" stroke-width="1.8" fill="none" clip-path="url(#cl1)"/><path d="M725.00 497.48 C726.68 497.41 727.53 497.45 729.20 497.30 C730.89 497.15 731.72 496.69 733.40 496.72 C735.08 496.75 735.91 497.37 737.60 497.45 C739.27 497.54 740.20 497.58 741.80 497.14 C743.56 496.66 744.38 495.01 746.00 495.15 C747.74 495.29 748.38 497.36 750.20 497.84 C751.74 498.25 752.72 497.51 754.40 497.38 C756.08 497.25 756.92 497.28 758.60 497.19 C760.28 497.10 761.15 496.76 762.80 496.93 C764.51 497.11 765.29 497.89 767.00 498.05 C768.65 498.20 769.52 497.73 771.20 497.71 C772.88 497.70 773.86 498.44 775.40 497.99 C777.22 497.47 777.80 495.67 779.60 495.30 C781.16 494.97 782.17 495.71 783.80 496.25 C785.53 496.84 786.29 498.05 788.00 498.12 C789.65 498.20 790.47 496.93 792.20 496.63 C793.83 496.34 794.73 496.55 796.40 496.66 C798.09 496.76 798.91 497.04 800.60 497.15 C802.27 497.27 803.13 497.08 804.80 497.21 C806.49 497.35 807.35 497.98 809.00 497.84 C810.71 497.69 811.48 496.70 813.20 496.50 C814.84 496.31 815.75 496.54 817.40 496.86 C819.11 497.18 819.89 497.89 821.60 498.10 C823.25 498.31 824.12 497.95 825.80 497.90 C827.48 497.84 828.32 497.76 830.00 497.81 C831.68 497.86 832.53 498.22 834.20 498.15 C835.89 498.08 836.71 497.59 838.40 497.46 C840.07 497.33 840.93 497.62 842.60 497.50 C844.29 497.37 845.12 496.88 846.80 496.85 C848.48 496.83 849.31 497.30 851.00 497.37 C852.67 497.43 853.52 497.17 855.20 497.18 C856.88 497.18 857.72 497.41 859.40 497.40 C861.08 497.39 861.92 497.13 863.60 497.14 C865.28 497.15 866.12 497.35 867.80 497.47 C869.48 497.59 870.35 497.92 872.00 497.75 C873.71 497.58 874.49 496.84 876.20 496.60 C877.85 496.38 878.72 496.56 880.40 496.61 C882.08 496.66 882.93 496.70 884.60 496.86 C886.77 497.06 888.74 498.68 890.00 497.50 C892.10 495.54 891.45 492.21 893.00 489.00 C893.77 487.41 894.79 485.32 895.80 485.50 C896.99 485.72 897.79 488.05 898.50 490.00 C899.67 493.25 899.22 496.79 900.50 498.50 C901.02 499.19 902.00 497.00 903.00 496.00 C904.00 495.00 904.40 493.72 905.50 493.50 C906.40 493.32 907.10 494.27 908.00 495.00 C909.30 496.07 909.60 497.40 911.00 498.00 C912.00 498.43 912.80 497.75 914.00 497.56 C915.68 497.29 916.52 496.84 918.20 496.85 C919.88 496.85 920.73 497.62 922.40 497.58 C924.09 497.55 924.90 496.82 926.60 496.67 C928.26 496.52 929.16 496.55 930.80 496.84 C932.52 497.16 933.28 497.99 935.00 498.20 C936.64 498.40 937.55 498.15 939.20 497.86 C940.91 497.57 941.70 496.83 943.40 496.74 C945.06 496.66 945.92 497.47 947.60 497.45 C949.28 497.43 950.12 496.61 951.80 496.63 C953.48 496.65 954.31 497.27 956.00 497.56 C957.67 497.85 958.53 498.16 960.20 498.08 C961.89 498.01 962.70 497.42 964.40 497.19 C966.06 496.97 966.93 496.84 968.60 496.95 C970.29 497.07 971.11 497.55 972.80 497.77 C974.47 497.99 975.32 498.08 977.00 498.06 C978.68 498.04 979.54 497.95 981.20 497.67 C982.90 497.38 983.70 496.81 985.40 496.66 C987.06 496.51 987.93 496.98 989.60 496.91 C991.29 496.84 992.13 496.27 993.80 496.31 C995.49 496.34 996.33 496.73 998.00 497.07 C999.69 497.42 1000.50 497.86 1002.20 498.03 C1003.86 498.20 1004.89 498.47 1006.40 497.91 C1008.25 497.24 1008.88 495.04 1010.60 494.96 C1012.24 494.88 1012.99 497.01 1014.80 497.51 C1016.35 497.95 1017.32 497.31 1019.00 497.30 C1020.68 497.30 1021.52 497.37 1023.20 497.48 C1024.88 497.60 1025.73 497.99 1027.40 497.89 C1029.09 497.80 1029.92 497.01 1031.60 497.03 C1033.28 497.05 1034.11 497.96 1035.80 497.99 C1037.47 498.02 1038.32 497.17 1040.00 497.17 C1041.68 497.17 1042.51 497.94 1044.20 498.01 C1045.87 498.08 1046.72 497.56 1048.40 497.53 C1050.08 497.50 1050.92 497.81 1052.60 497.86 C1054.28 497.91 1055.15 498.01 1056.80 497.77 C1058.51 497.52 1059.29 496.82 1061.00 496.65 C1062.65 496.48 1063.53 496.70 1065.20 496.91 C1066.89 497.13 1067.73 497.74 1069.40 497.71 C1071.09 497.69 1071.93 496.75 1073.60 496.78 C1075.29 496.81 1076.10 497.70 1077.80 497.86 C1079.46 498.02 1080.33 497.77 1082.00 497.57 C1083.69 497.36 1084.51 496.91 1086.20 496.83 C1087.87 496.75 1088.73 496.93 1090.40 497.17 C1092.09 497.42 1092.95 498.15 1094.60 498.04 C1096.31 497.93 1097.11 496.65 1098.80 496.62 C1100.47 496.58 1101.28 497.62 1103.00 497.86 C1104.64 498.09 1105.54 497.96 1107.20 497.79 C1108.90 497.61 1109.72 496.99 1111.40 496.96 C1113.08 496.94 1113.91 497.52 1115.60 497.67 C1117.27 497.83 1118.12 497.64 1119.80 497.73 C1121.48 497.81 1122.32 498.02 1124.00 498.08 C1125.68 498.15 1126.53 498.22 1128.20 498.06 C1129.89 497.89 1130.71 497.32 1132.40 497.27 C1134.07 497.22 1134.92 497.82 1136.60 497.81 C1138.28 497.81 1139.12 497.28 1140.80 497.24 C1142.48 497.20 1143.32 497.56 1145.00 497.61 C1146.68 497.65 1147.53 497.66 1149.20 497.47 C1150.89 497.29 1151.72 496.68 1153.40 496.67 C1155.08 496.66 1155.91 497.30 1157.60 497.43 C1159.27 497.55 1160.12 497.40 1161.80 497.28 C1163.48 497.16 1164.32 497.00 1166.00 496.81" stroke="#d08a72" stroke-width="1.6" fill="none" clip-path="url(#cl2)"/><rect x="1035.5" y="474" width="5" height="14" rx="1" fill="#f7f7f2" stroke="#d6d6d6" stroke-width="0.8"/><rect x="1169.5" y="474" width="5" height="14" rx="1" fill="#f7f7f2" stroke="#d6d6d6" stroke-width="0.8"/></g></svg><svg style="left:0;top:0" width="1875" height="829" font-family="Liberation Sans"><path d="M1328 388.6 H1460" stroke="#e6e6e6"/><text x="1321.5" y="392.6" font-size="11.5" fill="#555" text-anchor="end">0</text><path d="M1328 336.3 H1460" stroke="#e6e6e6"/><text x="1321.5" y="340.3" font-size="11.5" fill="#555" text-anchor="end">50.00</text><path d="M1328 283.6 H1460" stroke="#e6e6e6"/><text x="1321.5" y="287.6" font-size="11.5" fill="#555" text-anchor="end">100.00</text><path d="M1328 231.7 H1460" stroke="#e6e6e6"/><text x="1321.5" y="235.7" font-size="11.5" fill="#555" text-anchor="end">150.00</text><path d="M1328 231 V389 M1401.7 231 V389" stroke="#e6e6e6"/><rect x="1358.5" y="283.6" width="85" height="105.2" rx="2" fill="#c8623f"/><text x="1406" y="275" font-size="11.5" fill="#d0664a" text-anchor="middle">102.00</text><text x="1401" y="412" font-size="11.5" fill="#555" text-anchor="middle">BU 10</text><rect x="1328" y="464" width="140" height="36" fill="#fff" stroke="#d8d8d8"/><rect x="1336" y="495" width="20" height="4" rx="1.5" fill="#c8623f"/><rect x="1373" y="495" width="20" height="4" rx="1.5" fill="#c8623f"/><rect x="1446" y="497" width="6" height="2" fill="#c8623f"/><path d="M1327 801 H1460" stroke="#e6e6e6"/><text x="1321.5" y="805" font-size="11.5" fill="#555" text-anchor="end">0</text><path d="M1327 752.3 H1460" stroke="#e6e6e6"/><text x="1321.5" y="756.3" font-size="11.5" fill="#555" text-anchor="end">100.00M</text><path d="M1327 703 H1460" stroke="#e6e6e6"/><text x="1321.5" y="707" font-size="11.5" fill="#555" text-anchor="end">200.00M</text><path d="M1327 654.2 H1460" stroke="#e6e6e6"/><text x="1321.5" y="658.2" font-size="11.5" fill="#555" text-anchor="end">300.00M</text><path d="M1327 604.2 H1460" stroke="#e6e6e6"/><text x="1321.5" y="608.2" font-size="11.5" fill="#555" text-anchor="end">400.00M</text><path d="M1327 604 V801 M1360 604 V801 M1422.7 604 V801" stroke="#e6e6e6"/><rect x="1341" y="629.2" width="35.5" height="171.8" rx="2" fill="#c8623f"/><rect x="1404.2" y="720.4" width="35.8" height="80.6" rx="2" fill="#c8623f"/><text x="1361" y="620" font-size="11.5" fill="#d0664a" text-anchor="middle">353.17M</text><text x="1424" y="711.5" font-size="11.5" fill="#d0664a" text-anchor="middle">167.67M</text><text x="1359" y="825" font-size="11.5" fill="#555" text-anchor="middle">Europe</text><text x="1422" y="825" font-size="11.5" fill="#555" text-anchor="middle">Asia</text></svg><div class="a" style="left:42px;top:582px;width:566px;height:260px;border:1px solid #d5d8de;background:#fff"></div><div class="a" style="left:42px;top:637px;width:566px;height:1.5px;background:#d5d8de"></div><div class="a" style="left:320px;top:602px;width:2px;height:17px;background:#dde0e6"></div><div class="a" style="left:600px;top:602px;width:2px;height:17px;background:#dde0e6"></div><div class="t" style="left:53px;top:603px;font-size:15.5px;color:#444">source</div><div class="t" style="right:1283px;top:603px;font-size:15.3px;color:#444">Sum(experience)</div><div class="t" style="left:53px;top:657px;font-size:11.3px;color:#555">Emuser</div><div class="t" style="right:1284px;top:657px;font-size:11.3px;color:#555">6</div><div class="a" style="left:43px;top:685px;width:557px;height:1px;background:#e6e8ee"></div><div class="t" style="left:53px;top:704px;font-size:11.3px;color:#555">Referral</div><div class="t" style="right:1284px;top:704px;font-size:11.3px;color:#555">130</div><div class="a" style="left:43px;top:732px;width:557px;height:1px;background:#e6e8ee"></div><div class="t" style="left:53px;top:751px;font-size:11.3px;color:#555">Orgspire</div><div class="t" style="right:1284px;top:751px;font-size:11.3px;color:#555">15</div><div class="a" style="left:43px;top:779px;width:557px;height:1px;background:#e6e8ee"></div><div class="t" style="left:53px;top:798px;font-size:11.3px;color:#555">Indeed</div><div class="t" style="right:1284px;top:798px;font-size:11.3px;color:#555">15</div><div class="a" style="left:600px;top:638px;width:7px;height:200px;background:#dcdcdc"></div><div class="a" style="left:601px;top:638px;width:6px;height:145px;background:#8c8c8c;border-radius:3px"></div><div class="a" style="left:639px;top:582px;width:566px;height:260px;border:1px solid #d5d8de;background:#fff"></div><div class="a" style="left:639px;top:637px;width:566px;height:1.5px;background:#d5d8de"></div><div class="a" style="left:917px;top:602px;width:2px;height:17px;background:#dde0e6"></div><div class="a" style="left:1197px;top:602px;width:2px;height:17px;background:#dde0e6"></div><div class="t" style="left:650px;top:603px;font-size:15.5px;color:#444">designation</div><div class="t" style="left:929px;top:603px;font-size:15.5px;color:#444">expected_joining_date</div><div class="t" style="left:650px;top:657px;font-size:11.3px;color:#555">Development Manager</div><div class="t" style="left:930px;top:657px;font-size:11.3px;color:#555">17</div><div class="a" style="left:640px;top:685px;width:557px;height:1px;background:#e6e8ee"></div><div class="t" style="left:650px;top:704px;font-size:11.3px;color:#555">QA Engineer</div><div class="t" style="left:930px;top:704px;font-size:11.3px;color:#555">72</div><div class="a" style="left:640px;top:732px;width:557px;height:1px;background:#e6e8ee"></div><div class="t" style="left:650px;top:751px;font-size:11.3px;color:#555">Solution Specialist</div><div class="t" style="left:930px;top:751px;font-size:11.3px;color:#555">17</div><div class="a" style="left:640px;top:779px;width:557px;height:1px;background:#e6e8ee"></div><div class="t" style="left:650px;top:798px;font-size:11.3px;color:#555">iOS Developer</div><div class="t" style="left:930px;top:798px;font-size:11.3px;color:#555">16</div><div class="a" style="left:1197px;top:638px;width:7px;height:200px;background:#dcdcdc"></div><div class="a" style="left:1198px;top:638px;width:6px;height:26px;background:#8c8c8c;border-radius:3px"></div><div class="a" style="left:20px;top:826.5px;width:1855px;height:1.5px;background:#b9c2cc"></div><div class="a" style="left:20px;top:828px;width:1855px;height:1px;background:#e4e8ec"></div><div class="a" style="left:1452px;top:48px;width:40px;height:781px;background:#fff;border:2px solid #e6e9ee;border-bottom:none;box-shadow:-5px 0 8px rgba(0,0,0,0.06)"></div><div class="a" style="left:1454px;top:50px;width:36px;height:147px;background:#8a8a8a"></div><div class="t" style="left:1462px;top:251px;font-size:13.5px;color:#444;writing-mode:vertical-rl">Saved Filters</div><div class="a" style="left:1491px;top:47px;width:338px;height:781px;background:#fff;border-left:1px solid #d8d8d8;box-shadow:-6px 0 10px rgba(0,0,0,0.07)"></div><div class="a" style="left:1492px;top:47px;width:337px;height:46px;background:#f3f3f3"></div><div class="t" style="left:1502px;top:65px;font-size:13.5px;font-weight:bold;color:#2b2b2b">Filter</div><div class="a" style="left:1493px;top:52px;width:60px;height:34px;border:3.5px solid #ef8e12"></div><svg style="left:0;top:0" width="1875" height="829">
<path d="M1682.4 71.8 L1688.3 77.3 L1697.3 66.6" stroke="#222" stroke-width="2.4" fill="none"/>
<path d="M1724.6 61.9 H1721 Q1719 61.9 1719 63.9 V79.9 Q1719 81.9 1721 81.9 H1737 Q1739 81.9 1739 79.9 V63.9 Q1739 61.9 1737 61.9 H1728.9 V75" stroke="#333" stroke-width="1.7" fill="none"/>
<path d="M1724.2 70.3 L1728.9 75.2 L1733.6 70.3" stroke="#333" stroke-width="1.7" fill="none"/>
<path d="M1761.2 73.5 A7.8 7.8 0 0 1 1775.2 67.5 M1775.8 71 A7.8 7.8 0 0 1 1761.8 76.5" stroke="#222" stroke-width="1.5" fill="none"/>
<path d="M1758 72.5 L1761 68.5 L1764 72.5Z M1773 70.5 L1779 70.5 L1776 74.5Z" fill="#222"/>
<path d="M1800.3 64.2 L1816.7 79.8 M1816.7 64.2 L1800.3 79.8" stroke="#333" stroke-width="1.5"/>
</svg><div class="a" style="left:1496px;top:93px;width:86px;height:40px;border:3.5px solid #e77373"></div><svg style="left:1506px;top:106px" width="10" height="16" viewBox="0 0 10 16"><path d="M8 1 L2 8 L8 15" stroke="#333" stroke-width="1.4" fill="none"/></svg><div class="t" style="left:1537px;top:105px;font-size:13.5px;color:#333">team</div><div class="a" style="left:1783px;top:107px;width:36px;height:18px;border:1px solid #d6d6d6;border-radius:9px;background:#fff"></div><div class="a" style="left:1787px;top:110px;width:12px;height:12px;border-radius:6px;background:#dedede"></div><div class="a" style="left:1494px;top:143px;width:332px;height:36px;border-radius:7px;background:#c2dbfb"></div><div class="a" style="left:1497.5px;top:147px;width:325px;height:31px;border-radius:5px;background:#fff;border:1px solid #86b3f0"></div><div class="t" style="left:1507px;top:155px;font-size:14px;color:#3a3a3a">In</div><svg style="left:1793px;top:158px" width="13" height="9" viewBox="0 0 13 9"><path d="M1 1.5 L6.5 7 L12 1.5" stroke="#222" stroke-width="1.8" fill="none"/></svg><div class="a" style="left:1492px;top:274.5px;width:330px;height:1px;background:#c8c8c8"></div><div class="a" style="left:1492px;top:275px;width:330px;height:449px;overflow:hidden"><div class="a" style="left:0;top:38.8px;width:330px;height:1px;background:#c8c8c8"></div><div class="t" style="left:10px;top:12.0px;font-size:13.5px;color:#444">T6</div><div class="a" style="left:301px;top:13.3px;width:13px;height:13px;border:1px solid #b9b9b9;border-radius:3px"></div><div class="a" style="left:0;top:78.1px;width:330px;height:1px;background:#c8c8c8"></div><div class="t" style="left:10px;top:51.3px;font-size:13.5px;color:#444">BU 6</div><div class="a" style="left:301px;top:52.6px;width:13px;height:13px;border:1px solid #b9b9b9;border-radius:3px"></div><div class="a" style="left:0;top:117.4px;width:330px;height:1px;background:#c8c8c8"></div><div class="t" style="left:10px;top:90.6px;font-size:13.5px;color:#444">BU 11</div><div class="a" style="left:301px;top:91.9px;width:13px;height:13px;border:1px solid #b9b9b9;border-radius:3px"></div><div class="a" style="left:0;top:156.7px;width:330px;height:1px;background:#c8c8c8"></div><div class="t" style="left:10px;top:129.9px;font-size:13.5px;color:#444">BU 7</div><div class="a" style="left:301px;top:131.2px;width:13px;height:13px;border:1px solid #b9b9b9;border-radius:3px"></div><div class="a" style="left:0;top:196.0px;width:330px;height:1px;background:#c8c8c8"></div><div class="t" style="left:10px;top:169.2px;font-size:13.5px;color:#444">BU 8</div><div class="a" style="left:301px;top:170.5px;width:13px;height:13px;border:1px solid #b9b9b9;border-radius:3px"></div><div class="a" style="left:0;top:235.3px;width:330px;height:1px;background:#c8c8c8"></div><div class="t" style="left:10px;top:208.5px;font-size:13.5px;color:#444">BU 4</div><div class="a" style="left:301px;top:209.8px;width:13px;height:13px;border:1px solid #b9b9b9;border-radius:3px"></div><div class="a" style="left:0;top:274.6px;width:330px;height:1px;background:#c8c8c8"></div><div class="t" style="left:10px;top:247.8px;font-size:13.5px;color:#444">BU 2</div><div class="a" style="left:301px;top:249.1px;width:13px;height:13px;border:1px solid #b9b9b9;border-radius:3px"></div><div class="a" style="left:0;top:313.9px;width:330px;height:1px;background:#c8c8c8"></div><div class="t" style="left:10px;top:287.1px;font-size:13.5px;color:#444">BU 1</div><div class="a" style="left:301px;top:288.4px;width:13px;height:13px;border:1px solid #b9b9b9;border-radius:3px"></div><div class="a" style="left:0;top:353.2px;width:330px;height:1px;background:#c8c8c8"></div><div class="t" style="left:10px;top:326.4px;font-size:13.5px;color:#444">BU 5</div><div class="a" style="left:301px;top:327.7px;width:13px;height:13px;border:1px solid #b9b9b9;border-radius:3px"></div><div class="a" style="left:0;top:392.5px;width:330px;height:1px;background:#c8c8c8"></div><div class="t" style="left:10px;top:365.7px;font-size:13.5px;color:#444">BU 9</div><div class="a" style="left:301px;top:367.0px;width:13px;height:13px;border:1px solid #b9b9b9;border-radius:3px"></div><div class="a" style="left:0;top:431.8px;width:330px;height:1px;background:#c8c8c8"></div><div class="t" style="left:10px;top:405.0px;font-size:13.5px;color:#444">BU 12</div><div class="a" style="left:301px;top:406.3px;width:13px;height:13px;border:1px solid #b9b9b9;border-radius:3px"></div><div class="a" style="left:0;top:471.1px;width:330px;height:1px;background:#c8c8c8"></div><div class="t" style="left:10px;top:444.3px;font-size:13.5px;color:#444">BU 13</div><div class="a" style="left:301px;top:445.6px;width:13px;height:13px;border:1px solid #b9b9b9;border-radius:3px"></div></div><div class="a" style="left:1492px;top:262px;width:330px;height:100px;background:linear-gradient(rgba(0,0,0,0.13),rgba(0,0,0,0.06) 35%,rgba(0,0,0,0))"></div><div class="a" style="left:1496px;top:175px;width:327px;height:91px;border:4px solid #f5a300;border-radius:11px;background:#fff;box-shadow:0 6px 12px rgba(0,0,0,0.12)"></div><div class="a" style="left:1500px;top:179.5px;width:319px;height:20.5px;background:#1967d2;border-radius:6px 6px 0 0"></div><div class="a" style="left:1500px;top:259.5px;width:319px;height:1px;background:#b8b8b8"></div><div class="a" style="left:1500px;top:260.5px;width:319px;height:1.5px;background:#f4f4f4"></div><div class="t" style="left:1508px;top:182px;font-size:14px;color:#fff">In</div><div class="t" style="left:1508px;top:202px;font-size:14px;color:#222">Not in</div><div class="t" style="left:1508px;top:222px;font-size:14px;color:#222">Like</div><div class="t" style="left:1508px;top:242px;font-size:14px;color:#222">Not like</div><div class="a" style="left:1488px;top:270px;width:337px;height:461px;border:2px solid #f3a40d;border-radius:40px"></div><div class="a" style="left:1827.5px;top:136px;width:2px;height:638px;background:#9a9a9a"></div><div class="a" style="left:1828px;top:774px;width:1.5px;height:53px;background:#d0d0d0"></div><div class="a" style="left:1822.5px;top:237px;width:6px;height:487px;background:#c9c9c9"></div><div class="a" style="left:1822.5px;top:237px;width:6px;height:432px;background:#9a9a9a"></div><div class="a" style="left:1829px;top:47px;width:46px;height:780px;background:linear-gradient(90deg,#ececec,#fafafa 8px,#fff 14px)"></div><div class="a" style="left:1834.5px;top:56.80px;width:38px;height:38px;border-radius:19px;background:#eeeeee"></div><div class="a" style="left:1834.5px;top:103.95px;width:38px;height:38px;border-radius:19px;background:#eeeeee"></div><div class="a" style="left:1834.5px;top:151.10px;width:38px;height:38px;border-radius:19px;background:#eeeeee"></div><div class="a" style="left:1834.5px;top:198.25px;width:38px;height:38px;border-radius:19px;background:#f0900f"></div><div class="a" style="left:1834.5px;top:245.40px;width:38px;height:38px;border-radius:19px;background:#eeeeee"></div><div class="a" style="left:1834.5px;top:292.55px;width:38px;height:38px;border-radius:19px;background:#eeeeee"></div><div class="a" style="left:1834.5px;top:339.70px;width:38px;height:38px;border-radius:19px;background:#eeeeee"></div><div class="a" style="left:1834.5px;top:386.85px;width:38px;height:38px;border-radius:19px;background:#eeeeee"></div><div class="a" style="left:1834.5px;top:434.00px;width:38px;height:38px;border-radius:19px;background:#eeeeee"></div><div class="a" style="left:1834.5px;top:481.15px;width:38px;height:38px;border-radius:19px;background:#eeeeee"></div><div class="a" style="left:1834.5px;top:528.30px;width:38px;height:38px;border-radius:19px;background:#eeeeee"></div><div class="a" style="left:1834.5px;top:575.45px;width:38px;height:38px;border-radius:19px;background:#eeeeee"></div><svg style="left:0;top:0" width="1875" height="829"><g transform="translate(0 0.80)"><circle cx="1852.0" cy="73.5" r="6.5" stroke="#222" stroke-width="1.5" fill="none"/><path d="M1856.8 78.3 L1861.5 83" stroke="#222" stroke-width="2.4"/></g><g transform="translate(0 0.95)"><path d="M1853.5 114.5 V129.5 M1846.0 122 H1861.0" stroke="#444" stroke-width="1.4"/></g><g transform="translate(0 0.10)"><g stroke="#333" stroke-width="1.15" fill="none" stroke-linejoin="round"><path d="M1852.6 161.5 H1849.2 L1844.5 166 V169 L1843.6 171.2 L1844.4 173.5 V176 L1845.8 177.5 V179.6 L1847.6 181.2 L1849.5 181.4 L1851 182.5 H1852.6 Z"/><path d="M1854.4 161.5 H1857.8 L1862.5 166 V169 L1863.4 171.2 L1862.6 173.5 V176 L1861.2 177.5 V179.6 L1859.4 181.2 L1857.5 181.4 L1856 182.5 H1854.4 Z"/><path d="M1853.5 161.5 V182.5" stroke-width="1.2"/><circle cx="1847.5" cy="167" r="1.2"/><path d="M1848.6 167.8 L1850.5 168.5 V169.8 H1852.6"/><circle cx="1847.5" cy="171.5" r="1.3"/><path d="M1846.2 171.5 H1844"/><circle cx="1849.5" cy="177.2" r="1.2"/><path d="M1849.5 176 V173.8 H1852.6"/><circle cx="1858.5" cy="166.5" r="1.25"/><path d="M1857.2 166.5 H1854.4"/><circle cx="1857.5" cy="171" r="1.2"/><path d="M1857.5 172.2 V174.3 H1861.5"/><circle cx="1857.2" cy="178" r="1.2"/></g></g><g transform="translate(0 0.25)"><path d="M1849.5 209.3 H1860.0 V225.5 H1847.5 V211.3 Z" stroke="#fff" stroke-width="1.6" fill="none" stroke-linejoin="round"/><path d="M1852.0 210.5 V214 M1854.2 210.5 V214 M1856.4 210.5 V214 M1858.5 210.5 V214" stroke="#fff" stroke-width="1"/></g><g transform="translate(0 0.40)"><path d="M1846.5 256.5 H1860.5 L1855.3 264 V271.5 L1851.7 269.8 V264 Z" stroke="#222" stroke-width="1.4" fill="none" stroke-linejoin="round"/></g><g transform="translate(0 0.55)"><circle cx="1847.5" cy="311" r="2.6" stroke="#222" stroke-width="1.3" fill="none"/><circle cx="1859.5" cy="304" r="2.6" stroke="#222" stroke-width="1.3" fill="none"/><circle cx="1859.5" cy="318" r="2.6" stroke="#222" stroke-width="1.3" fill="none"/><path d="M1849.8 309.6 L1857.2 305.4 M1849.8 312.4 L1857.2 316.6" stroke="#222" stroke-width="1.3"/></g><g transform="translate(0 0.70)"><path d="M1847.0 357 A6.5 6.5 0 0 1 1858.5 355 M1860.0 359 A6.5 6.5 0 0 1 1848.5 361" stroke="#222" stroke-width="1.4" fill="none"/><path d="M1855.5 353 L1860.5 353 L1859.5 358Z M1851.5 363 L1846.5 363 L1847.5 358Z" fill="#222"/></g><g transform="translate(0 0.85)"><path d="M1850.5 409 H1847.5 A4.5 4.5 0 0 1 1847.0 400 A6 6 0 0 1 1859.0 399 A4.5 4.5 0 0 1 1859.5 409 H1856.5" stroke="#222" stroke-width="1.3" fill="none"/><path d="M1853.5 403 V414 M1850.5 411 L1853.5 414 L1856.5 411" stroke="#222" stroke-width="1.3" fill="none"/></g><g transform="translate(0 1.00)"><path d="M1853.5 443 V455 M1849.5 451 L1853.5 455 L1857.5 451 M1844.5 454 V459 H1862.5 V454" stroke="#222" stroke-width="1.4" fill="none"/></g><g transform="translate(0 1.15)"><path d="M1853.5 491 A8 8 0 1 0 1854.5 507 C1851.5 505 1852.5 501 1856.5 501 H1859.5 A2.5 2.5 0 0 0 1861.5 498 A8 8 0 0 0 1853.5 491Z" stroke="#222" stroke-width="1.4" fill="none"/><circle cx="1849.5" cy="496" r="1.3" fill="#222"/><circle cx="1853.5" cy="494" r="1.3" fill="#222"/><circle cx="1857.5" cy="496" r="1.3" fill="#222"/><circle cx="1848.5" cy="501" r="1.3" fill="#222"/></g><g transform="translate(0 0.30)"><path d="M1853.5 539.5 V550" stroke="#222" stroke-width="2.2"/><circle cx="1853.5" cy="553.5" r="1.2" fill="#222"/></g><g transform="translate(0 0.45)"><rect x="1845.0" y="587.5" width="17" height="13" rx="1.5" stroke="#222" stroke-width="1.6" fill="none"/><path d="M1848.5 591.5 H1858.5 M1848.5 594.5 H1858.5 M1848.5 597.5 H1855.5" stroke="#222" stroke-width="1.2"/></g></svg><svg style="left:0.0px;top:34.5px" width="58.0" height="39.0" viewBox="-19.5 -19.5 58.0 39.0">
<path d="M36.5 0 L9.38 -15.95 A18.5 18.5 0 1 0 9.38 15.95 Z" fill="#f6ab0c"/>
<text x="2.5" y="7.4" font-size="20.5" fill="#fff" text-anchor="middle" font-family="Liberation Sans">2</text></svg><svg style="left:1439.0px;top:51.5px" width="57.0" height="39.0" viewBox="-19.5 -19.5 57.0 39.0">
<path d="M35.5 0 L9.64 -15.79 A18.5 18.5 0 1 0 9.64 15.79 Z" fill="#f6ab0c"/>
<text x="2.5" y="7.4" font-size="20.5" fill="#fff" text-anchor="middle" font-family="Liberation Sans">3</text></svg><svg style="left:1442.5px;top:97.5px" width="57.5" height="39.0" viewBox="-19.5 -19.5 57.5 39.0">
<path d="M36 0 L9.51 -15.87 A18.5 18.5 0 1 0 9.51 15.87 Z" fill="#f6ab0c"/>
<text x="2.5" y="7.4" font-size="20.5" fill="#fff" text-anchor="middle" font-family="Liberation Sans">4</text></svg><div class="a" style="left:20px;top:826.5px;width:1855px;height:1.5px;background:#b9c2cc"></div><div class="a" style="left:20px;top:828px;width:1855px;height:1px;background:#e4e8ec"></div></body></html>
